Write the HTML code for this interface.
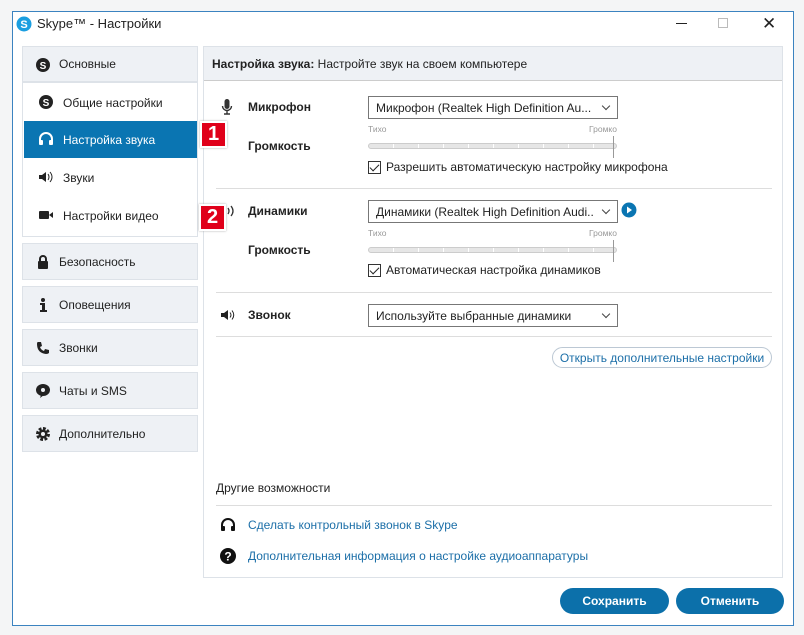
<!DOCTYPE html>
<html><head><meta charset="utf-8"><style>
*{box-sizing:border-box;margin:0;padding:0}
body{width:804px;height:635px;background:#f4f5f6;font-family:"Liberation Sans",sans-serif;font-size:12px;color:#222;position:relative;overflow:hidden}
.a{position:absolute}
.win{left:12px;top:11px;width:782px;height:615px;background:#fff;border:1px solid #3b83c0}
.nav{background:#eef1f5;border:1px solid #dde2e8;left:22px;width:176px;height:37px;display:flex;align-items:center;padding-left:36px}
.ic{position:absolute;left:12px;top:10px;width:16px;height:16px}
.sub{left:22px;top:82px;width:176px;height:155px;border:1px solid #dde2e8;background:#fff}
.si{position:absolute;left:1px;width:173px;height:37px;display:flex;align-items:center;padding-left:39px}
.lbl{font-weight:bold}
.dd{left:368px;width:250px;height:23px;border:1px solid #777;background:#fff;padding:4px 7px 0 7px;font-size:12px;white-space:nowrap;overflow:hidden}
.dd span{display:block;width:218px;overflow:hidden}
.dd:after{content:"";position:absolute;right:8px;top:6px;width:5px;height:5px;border-right:1px solid #444;border-bottom:1px solid #444;transform:rotate(45deg)}
.sm{font-size:8.5px;color:#999}
.sl{left:368px;width:249px;height:6px;border-radius:3px;background:repeating-linear-gradient(90deg,#e6e6e6 0 24px,#fff 24px 25px);border:1px solid #ccc}
.cb{width:13px;height:13px;border:1px solid #333;left:368px}
.cb:after{content:"";position:absolute;left:3px;top:0px;width:4px;height:8px;border-right:1.5px solid #222;border-bottom:1.5px solid #222;transform:rotate(45deg)}
.sep{left:216px;width:556px;height:1px;background:#ddd}
.btn{top:588px;height:26px;border-radius:13px;background:#0c70aa;color:#fff;font-weight:bold;display:flex;align-items:center;justify-content:center}
.badge{width:27px;height:27px;background:#e0001a;color:#fff;font-weight:bold;font-size:20px;display:flex;align-items:center;justify-content:center;border:2px solid #fff;box-shadow:0 0 2px #aaa}
.lnk{color:#1c6fa8}
</style></head><body>
<div class="a win"></div>
<svg class="a" style="left:16px;top:16px" width="16" height="16"><circle cx="8" cy="8" r="7.5" fill="#1a9ee0"/><text x="8" y="12" font-size="11" font-weight="bold" fill="#fff" text-anchor="middle" font-family="Liberation Sans">S</text></svg>
<div class="a" style="left:37px;top:16px;font-size:13px">Skype™ - Настройки</div>
<div class="a" style="left:676px;top:23px;width:11px;height:1px;background:#222"></div>
<div class="a" style="left:718px;top:18px;width:10px;height:10px;border:1px solid #bbb"></div>
<div class="a" style="left:762px;top:14px;font-size:17px;color:#222">✕</div>

<div class="a nav" style="top:46px;height:36px"><svg class="ic" viewBox="0 0 16 16"><circle cx="8" cy="8" r="7" fill="#222"/><text x="8" y="12" font-size="10" font-weight="bold" fill="#fff" text-anchor="middle" font-family="Liberation Sans">S</text></svg>Основные</div>
<div class="a sub">
 <div class="si" style="top:1px"><svg class="ic" style="left:14px" viewBox="0 0 16 16"><circle cx="8" cy="8" r="7" fill="#222"/><text x="8" y="12" font-size="10" font-weight="bold" fill="#fff" text-anchor="middle" font-family="Liberation Sans">S</text></svg>Общие настройки</div>
 <div class="si" style="top:38px;background:#0a75b2;color:#fff"><svg class="ic" style="left:14px" viewBox="0 0 16 16"><path d="M2 10V8a6 6 0 0112 0v2" stroke="#fff" stroke-width="2" fill="none"/><rect x="1" y="9" width="4" height="5" rx="1" fill="#fff"/><rect x="11" y="9" width="4" height="5" rx="1" fill="#fff"/></svg>Настройка звука</div>
 <div class="si" style="top:76px"><svg class="ic" style="left:14px" viewBox="0 0 16 16"><path d="M1 6h3l4-3v10l-4-3H1z" fill="#222"/><path d="M10 5q2 3 0 6M12 3q4 5 0 10" stroke="#222" fill="none"/></svg>Звуки</div>
 <div class="si" style="top:114px"><svg class="ic" style="left:14px" viewBox="0 0 16 16"><rect x="1" y="4" width="10" height="8" rx="1" fill="#222"/><path d="M11 8l4-3v6z" fill="#222"/></svg>Настройки видео</div>
</div>
<div class="a nav" style="top:243px"><svg class="ic" viewBox="0 0 16 16"><rect x="3" y="7" width="10" height="8" rx="1" fill="#222"/><path d="M5 7V5a3 3 0 016 0v2" stroke="#222" stroke-width="2" fill="none"/></svg>Безопасность</div>
<div class="a nav" style="top:286px"><svg class="ic" viewBox="0 0 16 16"><circle cx="8" cy="3" r="2" fill="#222"/><path d="M5 6h5v7h2v2H5v-2h2V8H5z" fill="#222"/></svg>Оповещения</div>
<div class="a nav" style="top:329px"><svg class="ic" viewBox="0 0 16 16"><path d="M3 2l3 0 1 4-2 1q1 3 4 4l1-2 4 1v3q-1 1-3 1Q2 13 2 4q0-2 1-2z" fill="#222"/></svg>Звонки</div>
<div class="a nav" style="top:372px"><svg class="ic" viewBox="0 0 16 16"><ellipse cx="8" cy="7" rx="7" ry="6" fill="#222"/><path d="M6 12l-1 3 4-3z" fill="#222"/><circle cx="8" cy="7" r="2" fill="#eef1f5"/></svg>Чаты и SMS</div>
<div class="a nav" style="top:415px"><svg class="ic" viewBox="0 0 16 16"><circle cx="8" cy="8" r="5" fill="none" stroke="#222" stroke-width="4" stroke-dasharray="2.5 1.4"/><circle cx="8" cy="8" r="4.5" fill="#222"/><circle cx="8" cy="8" r="2" fill="#eef1f5"/></svg>Дополнительно</div>

<div class="a" style="left:203px;top:46px;width:580px;height:532px;border:1px solid #dde2e8;background:#fff"></div>
<div class="a" style="left:204px;top:47px;width:578px;height:34px;background:#eef1f5;border-bottom:1px solid #ccc;padding:10px 8px"><b>Настройка звука:</b> Настройте звук на своем компьютере</div>

<svg class="a" style="left:221px;top:99px" width="12" height="16"><rect x="3.5" y="0" width="5" height="10" rx="2.5" fill="#333"/><path d="M1.5 7a4.5 4.5 0 009 0M6 11.5v3M3 15h6" stroke="#333" stroke-width="1.4" fill="none"/></svg>
<div class="a lbl" style="left:248px;top:100px">Микрофон</div>
<div class="a dd" style="top:96px"><span>Микрофон (Realtek High Definition Au...</span></div>
<div class="a sm" style="left:368px;top:124px">Тихо</div><div class="a sm" style="left:589px;top:124px">Громко</div>
<div class="a lbl" style="left:248px;top:139px">Громкость</div>
<div class="a sl" style="top:143px"></div><div class="a" style="left:613px;top:136px;width:1px;height:22px;background:#999"></div>
<div class="a cb" style="top:161px"></div><div class="a" style="left:386px;top:160px;font-size:12px">Разрешить автоматическую настройку микрофона</div>
<div class="a sep" style="top:188px"></div>

<svg class="a" style="left:226px;top:205px" width="12" height="12"><path d="M2 3q2 3 0 6M5 1q4 5 0 10" stroke="#333" stroke-width="1.3" fill="none"/></svg>
<div class="a lbl" style="left:248px;top:204px">Динамики</div>
<div class="a dd" style="top:200px"><span>Динамики (Realtek High Definition Audi...</span></div>
<svg class="a" style="left:621px;top:202px" width="16" height="16"><circle cx="8" cy="8" r="7.5" fill="#0a75b2"/><path d="M6 4.5l5 3.5-5 3.5z" fill="#fff"/></svg>
<div class="a sm" style="left:368px;top:228px">Тихо</div><div class="a sm" style="left:589px;top:228px">Громко</div>
<div class="a lbl" style="left:248px;top:243px">Громкость</div>
<div class="a sl" style="top:247px"></div><div class="a" style="left:613px;top:240px;width:1px;height:22px;background:#999"></div>
<div class="a cb" style="top:264px"></div><div class="a" style="left:386px;top:263px;font-size:12px">Автоматическая настройка динамиков</div>
<div class="a sep" style="top:292px"></div>

<svg class="a" style="left:220px;top:309px" width="16" height="12"><path d="M1 4h3l4-3v10l-4-3H1z" fill="#222"/><path d="M10 3.5q2 2.5 0 5M12 1.5q3.5 4.5 0 9" stroke="#222" fill="none"/></svg>
<div class="a lbl" style="left:248px;top:308px">Звонок</div>
<div class="a dd" style="top:304px"><span>Используйте выбранные динамики</span></div>
<div class="a sep" style="top:336px"></div>
<div class="a lnk" style="left:552px;top:347px;width:220px;height:21px;border:1px solid #bcc8d4;border-radius:11px;text-align:center;padding-top:3px">Открыть дополнительные настройки</div>

<div class="a" style="left:216px;top:481px">Другие возможности</div>
<div class="a sep" style="top:505px"></div>
<svg class="a" style="left:220px;top:517px" width="16" height="16"><path d="M2 10V8a6 6 0 0112 0v2" stroke="#111" stroke-width="2" fill="none"/><rect x="1" y="9" width="4" height="5" rx="1" fill="#111"/><rect x="11" y="9" width="4" height="5" rx="1" fill="#111"/></svg>
<div class="a lnk" style="left:248px;top:518px">Сделать контрольный звонок в Skype</div>
<svg class="a" style="left:220px;top:548px" width="16" height="16"><circle cx="8" cy="8" r="8" fill="#111"/><text x="8" y="12.5" font-size="12" font-weight="bold" fill="#fff" text-anchor="middle" font-family="Liberation Sans">?</text></svg>
<div class="a lnk" style="left:248px;top:549px">Дополнительная информация о настройке аудиоаппаратуры</div>

<div class="a btn" style="left:560px;width:109px">Сохранить</div>
<div class="a btn" style="left:676px;width:108px">Отменить</div>

<div class="a badge" style="left:200px;top:121px">1</div>
<div class="a badge" style="left:199px;top:204px">2</div>
</body></html>
